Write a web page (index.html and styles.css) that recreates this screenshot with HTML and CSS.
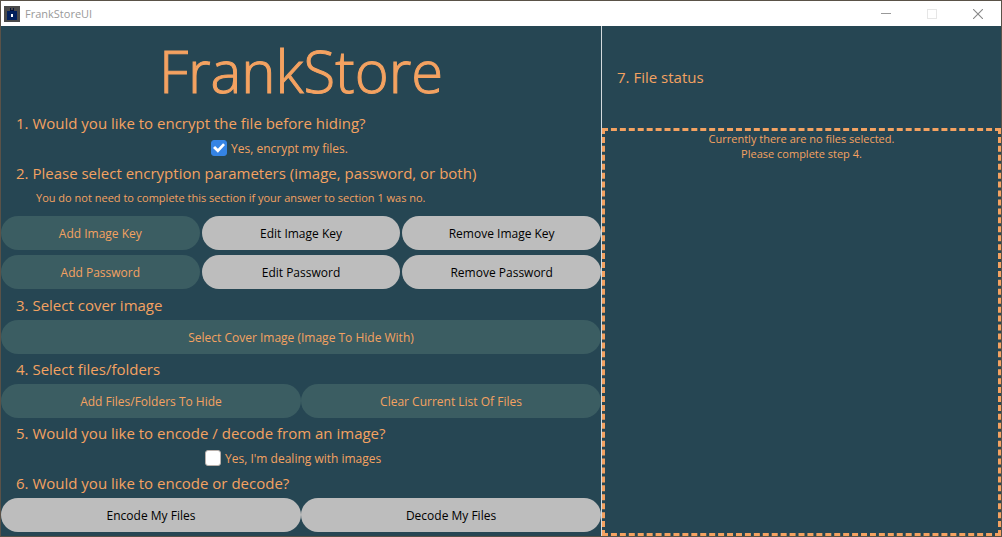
FILE: index.html
```html
<!DOCTYPE html>
<html lang="en">
<head>
<meta charset="utf-8">
<title>FrankStoreUI</title>
<link rel="stylesheet" href="styles.css">
</head>
<body>
<div class="window">
  <header class="titlebar">
    <svg class="app-icon" viewBox="0 0 16 16" shape-rendering="crispEdges" aria-hidden="true">
      <rect width="16" height="16" fill="#4a4a4a"/>
      <path d="M6 2h1v2h2V2h1v3H6z" fill="#06123a"/>
      <rect x="3" y="5" width="10" height="9" fill="#02205c"/>
      <rect x="7" y="8" width="2" height="3" fill="#fff"/>
    </svg>
    <span class="app-name">FrankStoreUI</span>
    <button class="win-btn" aria-label="Minimize"><svg viewBox="0 0 10 10" shape-rendering="crispEdges"><path d="M0 4.5h10" stroke="#999"/></svg></button>
    <button class="win-btn" aria-label="Maximize" disabled><svg viewBox="0 0 10 10" shape-rendering="crispEdges"><path d="M.5.5h9v9h-9z" fill="none" stroke="#e6e6e6"/></svg></button>
    <button class="win-btn" aria-label="Close"><svg viewBox="0 0 10 10"><path d="M0 0l10 10M10 0L0 10" stroke="#888" stroke-width="1.1"/></svg></button>
  </header>
  <main class="panes">
    <section class="steps">
      <h1 class="brand">FrankStore</h1>
      <h2 class="step">1. Would you like to encrypt the file before hiding?</h2>
      <label class="check check-encrypt"><input type="checkbox" checked>Yes, encrypt my files.</label>
      <h2 class="step">2. Please select encryption parameters (image, password, or both)</h2>
      <p class="note">You do not need to complete this section if your answer to section 1 was no.</p>
      <div class="keys">
        <button class="btn btn-muted">Add Image Key</button>
        <button class="btn">Edit Image Key</button>
        <button class="btn">Remove Image Key</button>
        <button class="btn btn-muted">Add Password</button>
        <button class="btn">Edit Password</button>
        <button class="btn">Remove Password</button>
      </div>
      <h2 class="step">3. Select cover image</h2>
      <div class="row"><button class="btn btn-muted">Select Cover Image (Image To Hide With)</button></div>
      <h2 class="step">4. Select files/folders</h2>
      <div class="row">
        <button class="btn btn-muted">Add Files/Folders To Hide</button>
        <button class="btn btn-muted">Clear Current List Of Files</button>
      </div>
      <h2 class="step">5. Would you like to encode / decode from an image?</h2>
      <label class="check check-images"><input type="checkbox">Yes, I'm dealing with images</label>
      <h2 class="step">6. Would you like to encode or decode?</h2>
      <div class="row">
        <button class="btn">Encode My Files</button>
        <button class="btn">Decode My Files</button>
      </div>
    </section>
    <section class="status">
      <h2 class="step status-title">7. File status</h2>
      <div class="file-list">
        <p>Currently there are no files selected.</p>
        <p>Please complete step 4.</p>
      </div>
    </section>
  </main>
</div>
</body>
</html>
```
FILE: styles.css
```css
* { box-sizing: border-box; }

body {
  margin: 0;
  background: #5a5248;
  color: #f4a261;
  font-family: "Open Sans", "Noto Sans", sans-serif;
  font-size: 12px;
}

h1, h2, p { margin: 0; font-weight: 400; }

.window {
  display: flex;
  flex-direction: column;
  min-height: 100vh;
  border: 1px solid #5a5248;
}

.titlebar {
  display: flex;
  align-items: center;
  height: 25px;
  padding-left: 3px;
  background: #fff;
  color: #999;
  font-size: 11px;
}

.app-icon { width: 16px; height: 16px; }
.app-name { flex: 1; padding-left: 5px; }

.win-btn {
  display: grid;
  place-items: center;
  width: 46px;
  height: 25px;
  padding: 0;
  border: 0;
  background: none;
}

.win-btn svg { width: 10px; height: 10px; }

.panes {
  display: grid;
  flex: 1;
  grid-template-columns: 3fr 2fr;
  background: #264653;
}

.steps { padding-bottom: 4px; }

.brand {
  height: 82px;
  padding-top: 5px;
  font-size: 58px;
  font-weight: 300;
  line-height: 80px;
  text-align: center;
  -webkit-text-stroke: 1px #f4a261;
}

.step {
  padding-left: 15px;
  font-size: 15px;
  line-height: 30px;
}

.check {
  display: flex;
  align-items: center;
  gap: 4px;
  height: 20px;
}

.check-encrypt { padding-left: 35%; }
.check-images { padding-left: 34%; }

.check input {
  display: grid;
  place-items: center;
  width: 16px;
  height: 16px;
  margin: 0;
  appearance: none;
  border: 1px solid #b8b0ab;
  border-radius: 3px;
  background: #fff;
}

.check input:checked { border-color: #3584e4; background: #3584e4; }

.check input:checked::before {
  content: "";
  width: 12px;
  height: 12px;
  background: #fff;
  clip-path: polygon(0 50%, 17% 34%, 41% 56%, 84% 10%, 100% 26%, 41% 90%);
}

.note { padding-left: 35px; font-size: 11px; line-height: 20px; }

.keys {
  display: grid;
  grid-template-columns: repeat(3, 1fr);
  gap: 5px 2px;
  padding: 8px 0 1px;
}

.row { display: flex; }
.row .btn { flex: 1; }

.btn {
  height: 34px;
  padding: 0 8px;
  border: 0;
  border-radius: 17px;
  background: #bdbdbd;
  color: #000;
  font: inherit;
}

.btn-muted { background: #3b5d62; color: #f4a261; }

.status {
  display: flex;
  flex-direction: column;
  border-left: 1px solid #d4dadd;
}

.status-title { line-height: 102px; }

.file-list {
  flex: 1;
  border: 3px dashed #f4a261;
  font-size: 11px;
  line-height: 15px;
  text-align: center;
}
```
